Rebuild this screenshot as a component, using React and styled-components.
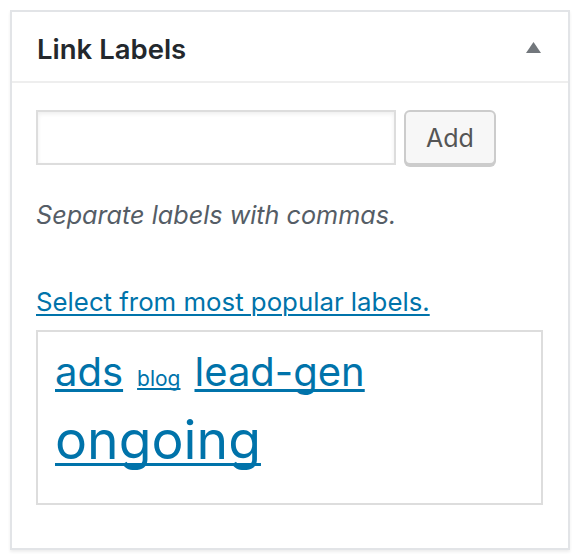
import React from "react";
import styled, { createGlobalStyle } from "styled-components";

const GlobalStyle = createGlobalStyle`
  body {
    margin: 0;
    background: #fff;
    font-family: Inter, "Noto Sans", sans-serif;
  }
`;

const Panel = styled.section`
  box-sizing: border-box;
  width: 560px;
  height: 540px;
  margin: 10px;
  background: #fff;
  border: 2px solid #e2e4e7;
  box-shadow: 0 2px 3px rgba(0, 0, 0, 0.07);
`;

const Header = styled.div`
  display: flex;
  align-items: center;
  justify-content: space-between;
  height: 69px;
  padding: 0 27px 0 25px;
  border-bottom: 2px solid #eee;
`;

const Title = styled.h2`
  margin: 4px 0 0;
  font-size: 27.5px;
  font-weight: 600;
  color: #23282d;
`;

const Toggle = styled.button`
  display: flex;
  align-items: center;
  justify-content: center;
  width: 15px;
  height: 20px;
  padding: 0;
  margin-top: 2px;
  border: none;
  background: none;
`;

const Body = styled.div`
  padding: 27px 24px 0;
`;

const Row = styled.div`
  display: flex;
  gap: 8px;
`;

const TextInput = styled.input`
  box-sizing: border-box;
  width: 360px;
  height: 55px;
  border: 2px solid #ddd;
  box-shadow: inset 0 2px 4px rgba(0, 0, 0, 0.07);
  outline: none;
`;

const AddButton = styled.button`
  box-sizing: border-box;
  width: 92px;
  height: 55px;
  border: 2px solid #ccc;
  border-radius: 6px;
  background: #f7f7f7;
  box-shadow: 0 2px 0 #ccc;
  color: #555;
  font-family: inherit;
  font-size: 25px;
`;

const Hint = styled.p`
  margin: 33px 0 0;
  font-size: 25.2px;
  line-height: 34px;
  font-style: italic;
  color: #555d66;
`;

const PopularLink = styled.a`
  display: inline-block;
  margin-top: 53px;
  font-size: 25.8px;
  line-height: 34px;
  color: #0073aa;
  text-decoration-thickness: 2px;
  text-underline-offset: 3px;
`;

const Cloud = styled.div`
  box-sizing: border-box;
  display: flex;
  flex-wrap: wrap;
  align-items: baseline;
  column-gap: 14px;
  row-gap: 12px;
  align-content: flex-start;
  width: 507px;
  height: 175px;
  margin-top: 11px;
  padding: 16px 17px;
  border: 2px solid #ddd;
`;

const Tag = styled.a`
  font-size: ${({ size }) => size}px;
  line-height: 1.2;
  color: #0073aa;
  text-decoration-thickness: ${({ size }) => (size > 30 ? 3 : 2)}px;
  text-underline-offset: ${({ size }) => Math.round(size / 12)}px;
  text-decoration-skip-ink: none;
`;

const tags = [
  { name: "ads", size: 40 },
  { name: "blog", size: 21 },
  { name: "lead-gen", size: 40 },
  { name: "ongoing", size: 53.5 },
];

const App = () => (
  <>
    <GlobalStyle />
    <Panel>
      <Header>
        <Title>Link Labels</Title>
        <Toggle aria-label="Toggle panel">
          <svg width="15" height="11" viewBox="0 0 15 11">
            <polygon points="7.5,0 15,11 0,11" fill="#72777c" />
          </svg>
        </Toggle>
      </Header>
      <Body>
        <Row>
          <TextInput type="text" />
          <AddButton>Add</AddButton>
        </Row>
        <Hint>Separate labels with commas.</Hint>
        <PopularLink href="#">Select from most popular labels.</PopularLink>
        <Cloud>
          {tags.map((t) => (
            <Tag key={t.name} href="#" size={t.size}>
              {t.name}
            </Tag>
          ))}
        </Cloud>
      </Body>
    </Panel>
  </>
);

export default App;
